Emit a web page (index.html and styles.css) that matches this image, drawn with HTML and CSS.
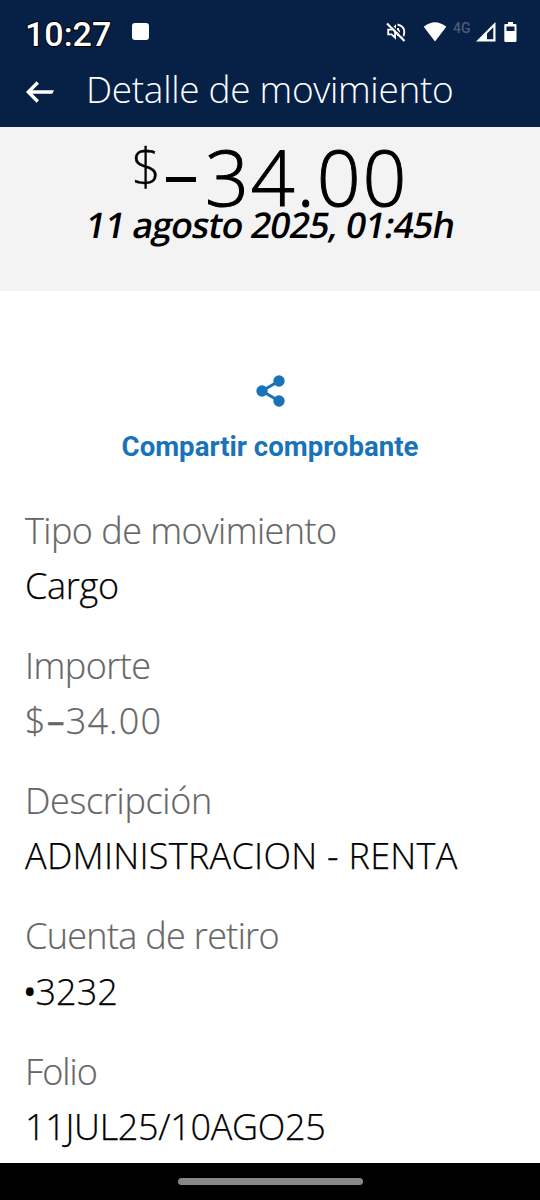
FILE: index.html
```html
<!DOCTYPE html>
<html lang="es">
<head>
<meta charset="utf-8">
<title>Detalle de movimiento</title>
<link rel="stylesheet" href="styles.css">
</head>
<body>
<header class="top">
  <div class="status">
    <span class="clock">10:27</span>
    <span class="notification"></span>
    <div class="indicators">
      <svg class="mute" viewBox="0 0 20 20" width="20" height="20" fill="none" stroke="#fff" stroke-width="1.8"><path d="M2.2 7.7H5.5L9.1 4.4V15.600L5.500 12.300H2.200Z"/><path d="M12 7.200Q14.300 10 12 12.800M11.500 2.500Q18.300 4 18.300 10Q18.300 14 15.500 16"/><path d="M12 6V14" stroke-width="2"/><path d="M2.800 .800 20 17.800" stroke="#072146" stroke-width="1.600"/><path d="M1 1.600 18.500 19" stroke-width="2.100"/></svg>
      <svg class="wifi" viewBox="0 0 24 20" width="24" height="20"><path fill="#fff" d="M.700 4.800Q12-4.200 23.300 4.800L12 19.500Z"/></svg>
      <span class="network">4G</span>
      <svg class="signal" viewBox="0 0 20 20" width="20" height="20"><path fill="#fff" fill-rule="evenodd" d="M0 19.500 19.500 0V19.500ZM11 17.300H17.300V5.300L11 11.500Z"/></svg>
      <svg class="battery" viewBox="0 0 13 20" width="13" height="20"><path fill="#fff" fill-rule="evenodd" d="M4 0H9V2H11.500Q12.500 2 12.500 3V18.500Q12.500 20 11.500 20H1.500Q.300 20 .300 18.500V3Q.300 2 1.500 2H4ZM2.500 4.500V9H10.500V4.500Z"/></svg>
    </div>
  </div>
  <div class="bar">
    <svg class="back" viewBox="0 0 28 22" width="28" height="22"><path fill="#fff" d="M0 11 10.500 .300 13 2.700 6.500 9.300H28L26.300 12.800H6.500L13 19.300 10.500 21.700Z"/></svg>
    <h1 class="title">Detalle de movimiento</h1>
  </div>
</header>
<section class="summary">
  <div class="amount"><span class="currency">$</span><span class="minus"></span><span class="figure">34.00</span></div>
  <div class="date">11 agosto 2025, 01:45h</div>
</section>
<main class="content">
  <div class="share">
    <svg class="share-icon" viewBox="0 0 30 32" width="30" height="32"><path d="M23 6 6 16 23 26" fill="none" stroke="#1973b8" stroke-width="3"/><g fill="#1973b8"><circle cx="23" cy="6" r="5.700"/><circle cx="6" cy="16" r="5.700"/><circle cx="23" cy="26" r="5.700"/></g></svg>
    <span class="share-label">Compartir comprobante</span>
  </div>
  <dl class="fields">
    <div class="field"><dt class="tight">Tipo de movimiento</dt><dd class="snug">Cargo</dd></div>
    <div class="field"><dt class="tight">Importe</dt><dd class="muted open">$<span class="dash">–</span>34.00</dd></div>
    <div class="field"><dt class="snug">Descripción</dt><dd class="caps">ADMINISTRACION - RENTA</dd></div>
    <div class="field"><dt class="tighter">Cuenta de retiro</dt><dd class="account"><span class="bullet">•</span>3232</dd></div>
    <div class="field"><dt class="tightest">Folio</dt><dd class="snug">11JUL25/10AGO25</dd></div>
  </dl>
</main>
<footer class="nav"><span class="pill"></span></footer>
</body>
</html>
```
FILE: styles.css
```css
* { box-sizing: border-box; }
body {
  margin: 0;
  width: 540px;
  height: 1200px;
  display: flex;
  flex-direction: column;
  overflow: hidden;
  background: #fff;
  color: #000;
  font-family: "Open Sans", "Noto Sans", sans-serif;
  font-weight: 320;
}
.top { height: 127px; flex: none; background: #072146; color: #fff; }
.status { height: 62px; padding: 4px 24px 0 25px; display: flex; align-items: center; }
.clock {
  width: 107px;
  font: 500 34px/60px Roboto, sans-serif;
  -webkit-text-stroke: 2px #000;
  paint-order: stroke fill;
  padding-top: 1px;
}
.notification { width: 17px; height: 17px; margin-top: -3px; border-radius: 3px; background: #fff; }
.indicators { display: flex; align-items: center; margin: -2px -1px 0 auto; }
.network { width: 19px; margin: -9px 4px 0 6px; color: #4b5a75; font: 500 14px/18px Roboto, sans-serif; }
.wifi { margin-left: 17px; }
.battery { margin-left: 8px; }
.bar { height: 65px; padding-left: 26px; display: flex; align-items: center; }
.back { margin-top: -5px; }
.title { margin: -12px 0 0 32px; font-size: 37px; font-weight: 300; line-height: 50px; letter-spacing: -.32px; white-space: nowrap; }
.summary { height: 164px; flex: none; background: #f3f3f3; display: flex; flex-direction: column; align-items: center; }
.amount { height: 78px; display: flex; align-items: flex-start; }
.currency { margin-left: -2px; font-size: 51px; line-height: 77px; -webkit-text-stroke: .3px #000; }
.minus { width: 30px; height: 5px; margin: 50px 9px 0 5px; background: #000; }
.figure { margin-right: -2px; font-size: 77px; line-height: 100px; letter-spacing: 1.8px; -webkit-text-stroke: 1px #000; }
.date { height: 40px; font-size: 35.5px; font-weight: 600; line-height: 39px; letter-spacing: -.85px; white-space: nowrap; transform: skewX(-10deg); }
.content { flex: 1; min-height: 0; }
.share { height: 211.5px; padding-top: 84px; display: flex; flex-direction: column; align-items: center; color: #1973b8; }
.share-icon { margin-left: 1px; }
.share-label { margin-top: 22px; font: 700 27.6px/36px Roboto, sans-serif; }
.fields { margin: 0; padding-left: 25px; display: flex; flex-direction: column; gap: 24.75px; font-size: 36px; line-height: 55.25px; white-space: nowrap; }
dd { margin: 0; -webkit-text-stroke: .25px currentColor; }
dt, .muted { color: #666; }
dt { -webkit-text-stroke: .2px currentColor; }
.snug { letter-spacing: -.3px; }
.tight { letter-spacing: -.53px; }
.tighter { letter-spacing: -.68px; }
.tightest { letter-spacing: -.95px; }
.caps { letter-spacing: .27px; }
.open { letter-spacing: 1.1px; }
.dash { font-weight: 500; }
.account { margin-left: -2px; }
.bullet { margin-right: -1px; font-weight: 500; }
.nav { height: 37px; flex: none; background: #000; display: flex; justify-content: center; padding-top: 15px; }
.pill { width: 185px; height: 7px; border-radius: 4px; background: #888; }
```
